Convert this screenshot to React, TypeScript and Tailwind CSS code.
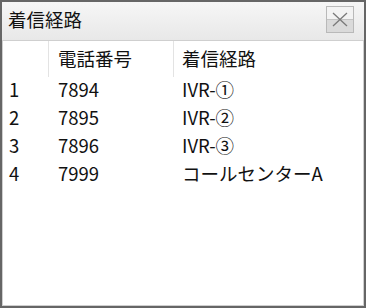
import React from 'react';

const rows = [
  { no: '1', tel: '7894', route: 'IVR-①' },
  { no: '2', tel: '7895', route: 'IVR-②' },
  { no: '3', tel: '7896', route: 'IVR-③' },
  { no: '4', tel: '7999', route: 'コールセンターA' },
];

const font = { fontFamily: '"Noto Sans CJK JP", "Noto Sans", sans-serif' };

export default function App() {
  return (
    <div
      className="w-[366px] h-[308px] border-2 border-[#666] bg-[#ececec] flex flex-col text-[#111] antialiased"
      style={font}
    >
      {/* title bar */}
      <div className="h-[38px] shrink-0 flex items-center justify-between pl-[6px] pr-[10px] bg-gradient-to-b from-[#f6f6f6] to-[#e8e8e8]">
        <span className="text-[18.5px] leading-none mb-[3px]">着信経路</span>
        <button className="w-[28px] h-[27px] mb-[3px] border border-[#b9b9b9] flex flex-col relative">
          <div className="h-1/2 w-full bg-[#f3f3f3] border-b border-[#c4c4c4]" />
          <div className="h-1/2 w-full bg-[#dadada]" />
          <svg className="absolute inset-0" width="26" height="25" viewBox="0 0 26 25">
            <path d="M6 6 L20 19 M20 6 L6 19" stroke="#7a7a7a" strokeWidth="1.3" fill="none" />
          </svg>
        </button>
      </div>

      {/* content */}
      <div className="flex-1 bg-white border border-[#cfcfcf]">
        <div className="grid grid-cols-[46px_125px_1fr] h-[36px] text-[18.5px] leading-none">
          <div className="border-r border-[#e3e3e3]" />
          <div className="border-r border-[#e3e3e3] pl-[9px] pb-[2px] flex items-center">電話番号</div>
          <div className="pl-[8px] pb-[2px] flex items-center">着信経路</div>
        </div>
        {rows.map((r) => (
          <div key={r.no} className="grid grid-cols-[46px_125px_1fr] h-[28px] pb-[3px] text-[18.5px] leading-none items-center">
            <div className="pl-[6px]">{r.no}</div>
            <div className="pl-[9px]">{r.tel}</div>
            <div className="pl-[8px]">{r.route}</div>
          </div>
        ))}
      </div>
    </div>
  );
}
